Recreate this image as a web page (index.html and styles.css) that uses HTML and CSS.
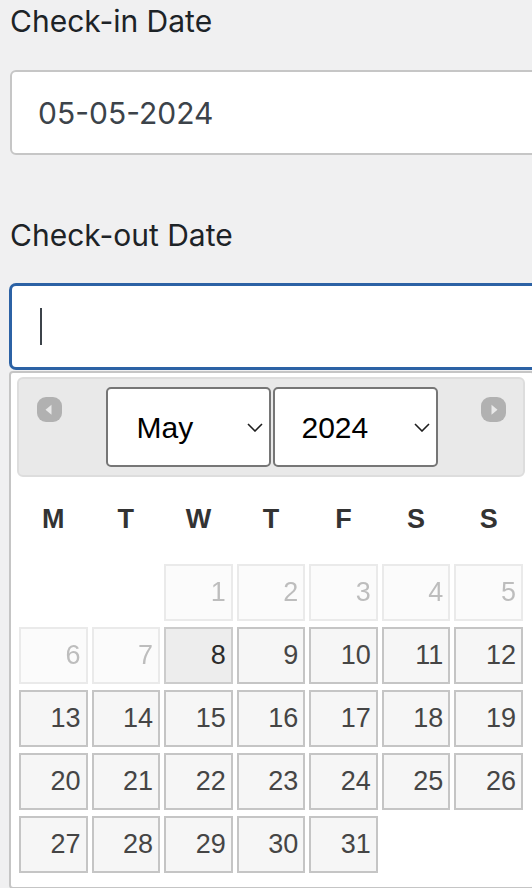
FILE: index.html
```html
<!DOCTYPE html>
<html lang="en">
<head>
    <meta charset="UTF-8">
    <meta name="viewport" content="width=device-width, initial-scale=1.0">
    <title>Booking Dates</title>
    <link rel="stylesheet" href="styles.css">
</head>
<body>
    <div class="booking-form">
        <!-- Check-in -->
        <div class="field">
            <label class="field-label" for="checkin">Check-in Date</label>
            <input class="date-input" id="checkin" type="text" value="05-05-2024">
        </div>

        <!-- Check-out (focused, picker open) -->
        <div class="field">
            <label class="field-label" for="checkout">Check-out Date</label>
            <div class="input-wrap">
                <input class="date-input is-focused" id="checkout" type="text">
                <span class="caret"></span>

                <div class="datepicker">
                    <div class="dp-header">
                        <a class="dp-nav" title="Prev">
                            <svg width="25" height="25" viewBox="0 0 25 25">
                                <rect width="25" height="25" rx="9" fill="#b1b1b1"/>
                                <path d="M8.5 12.8 L14.5 7.8 L14.5 17.8 Z" fill="#e9e9e9"/>
                            </svg>
                        </a>
                        <div class="dp-title">
                            <span class="dp-select">
                                <select class="dp-month">
                                    <option>Jan</option><option>Feb</option><option>Mar</option>
                                    <option>Apr</option><option selected>May</option><option>Jun</option>
                                    <option>Jul</option><option>Aug</option><option>Sep</option>
                                    <option>Oct</option><option>Nov</option><option>Dec</option>
                                </select>
                                <svg width="16" height="9" viewBox="0 0 16 9"><path d="M1 1 L8 8 L15 1" fill="none" stroke="#1e1e1e" stroke-width="1.6"/></svg>
                            </span>
                            <span class="dp-select">
                                <select class="dp-year">
                                    <option selected>2024</option><option>2025</option>
                                </select>
                                <svg width="16" height="9" viewBox="0 0 16 9"><path d="M1 1 L8 8 L15 1" fill="none" stroke="#1e1e1e" stroke-width="1.6"/></svg>
                            </span>
                        </div>
                        <a class="dp-nav" title="Next">
                            <svg width="25" height="25" viewBox="0 0 25 25">
                                <rect width="25" height="25" rx="9" fill="#b1b1b1"/>
                                <path d="M16.5 12.8 L10.5 7.8 L10.5 17.8 Z" fill="#e9e9e9"/>
                            </svg>
                        </a>
                    </div>

                    <table class="dp-calendar">
                        <thead>
                            <tr><th>M</th><th>T</th><th>W</th><th>T</th><th>F</th><th>S</th><th>S</th></tr>
                        </thead>
                        <tbody>
                            <tr>
                                <td></td><td></td>
                                <td><span class="dp-day is-disabled">1</span></td>
                                <td><span class="dp-day is-disabled">2</span></td>
                                <td><span class="dp-day is-disabled">3</span></td>
                                <td><span class="dp-day is-disabled">4</span></td>
                                <td><span class="dp-day is-disabled">5</span></td>
                            </tr>
                            <tr>
                                <td><span class="dp-day is-disabled">6</span></td>
                                <td><span class="dp-day is-disabled">7</span></td>
                                <td><a class="dp-day is-hover" href="#">8</a></td>
                                <td><a class="dp-day" href="#">9</a></td>
                                <td><a class="dp-day" href="#">10</a></td>
                                <td><a class="dp-day" href="#">11</a></td>
                                <td><a class="dp-day" href="#">12</a></td>
                            </tr>
                            <tr>
                                <td><a class="dp-day" href="#">13</a></td>
                                <td><a class="dp-day" href="#">14</a></td>
                                <td><a class="dp-day" href="#">15</a></td>
                                <td><a class="dp-day" href="#">16</a></td>
                                <td><a class="dp-day" href="#">17</a></td>
                                <td><a class="dp-day" href="#">18</a></td>
                                <td><a class="dp-day" href="#">19</a></td>
                            </tr>
                            <tr>
                                <td><a class="dp-day" href="#">20</a></td>
                                <td><a class="dp-day" href="#">21</a></td>
                                <td><a class="dp-day" href="#">22</a></td>
                                <td><a class="dp-day" href="#">23</a></td>
                                <td><a class="dp-day" href="#">24</a></td>
                                <td><a class="dp-day" href="#">25</a></td>
                                <td><a class="dp-day" href="#">26</a></td>
                            </tr>
                            <tr>
                                <td><a class="dp-day" href="#">27</a></td>
                                <td><a class="dp-day" href="#">28</a></td>
                                <td><a class="dp-day" href="#">29</a></td>
                                <td><a class="dp-day" href="#">30</a></td>
                                <td><a class="dp-day" href="#">31</a></td>
                                <td></td><td></td>
                            </tr>
                        </tbody>
                    </table>
                </div>
            </div>
        </div>
    </div>
</body>
</html>
```

FILE: styles.css
```css
html {
    overflow: hidden;
}

body {
    margin: 0;
    min-height: 888px;
    box-sizing: border-box;
    padding: 1px 0 0 10px;
    background: #f0f0f1;
    font-family: Inter, "Noto Sans", sans-serif;
}

.booking-form {
    width: 640px;
}

/* Form fields */
.field {
    margin-bottom: 60px;
}

.field-label {
    display: block;
    font-size: 30px;
    line-height: 40px;
    color: #1d2327;
    margin-bottom: 29px;
}

.date-input {
    display: block;
    box-sizing: border-box;
    width: 100%;
    height: 85px;
    padding: 0 26px;
    border: 2px solid #c6c6c6;
    border-radius: 6px;
    background: #fff;
    font-family: Inter, "Noto Sans", sans-serif;
    font-size: 30px;
    color: #3c434a;
    outline: none;
}

.date-input.is-focused {
    border-color: #2c62a5;
    box-shadow: 0 0 0 1px #2c62a5;
}

.input-wrap {
    position: relative;
}

/* Fake text caret for the focused field */
.caret {
    position: absolute;
    left: 29.5px;
    top: 24px;
    width: 2px;
    height: 37px;
    background: #3c434a;
}

/* Datepicker popup */
.datepicker {
    position: absolute;
    left: -1px;
    top: 100%;
    margin-top: 2px;
    width: 526px;
    box-sizing: border-box;
    padding: 4px 8px 0 6px;
    border: 2px solid #c5c5c5;
    border-radius: 4px;
    background: #fff;
    font-family: "Liberation Sans", Arial, sans-serif;
    color: #333;
}

.dp-header {
    display: flex;
    align-items: center;
    height: 100px;
    box-sizing: border-box;
    padding: 0 17px 0 18px;
    border: 2px solid #ddd;
    border-radius: 6px;
    background: #e9e9e9;
}

.dp-nav {
    display: block;
    align-self: flex-start;
    margin-top: 18px;
    width: 25px;
    height: 25px;
    cursor: pointer;
}

.dp-nav svg {
    display: block;
    filter: blur(0.5px);
}

.dp-title {
    flex: 1;
    display: flex;
    justify-content: center;
    gap: 2px;
}

.dp-select {
    position: relative;
    display: block;
}

.dp-select select {
    display: block;
    -webkit-appearance: none;
    appearance: none;
    width: 165px;
    height: 80px;
    padding: 0 0 0 27px;
    border: 2px solid #767676;
    border-radius: 5px;
    background: #fff;
    font-family: "Liberation Sans", Arial, sans-serif;
    font-size: 30px;
    color: #000;
}

.dp-select .dp-month {
    padding-left: 29px;
}

.dp-select svg {
    position: absolute;
    right: 8px;
    top: 35.5px;
    pointer-events: none;
}

/* Calendar grid */
.dp-calendar {
    width: 100%;
    border-collapse: collapse;
    table-layout: fixed;
    font-size: 27px;
    margin: 0 0 11px;
}

.dp-calendar th {
    height: 84px;
    padding: 0;
    font-weight: bold;
    text-align: center;
}

.dp-calendar td {
    padding: 2.75px 2px;
}

.dp-day {
    display: block;
    box-sizing: border-box;
    height: 57.5px;
    line-height: 53.5px;
    padding-right: 5px;
    text-align: right;
    border: 2px solid #c5c5c5;
    background: #f6f6f6;
    color: #454545;
    text-decoration: none;
}

.dp-day.is-disabled {
    opacity: .35;
}

.dp-day.is-hover {
    border-color: #ccc;
    background: #ededed;
    color: #2b2b2b;
}
```
